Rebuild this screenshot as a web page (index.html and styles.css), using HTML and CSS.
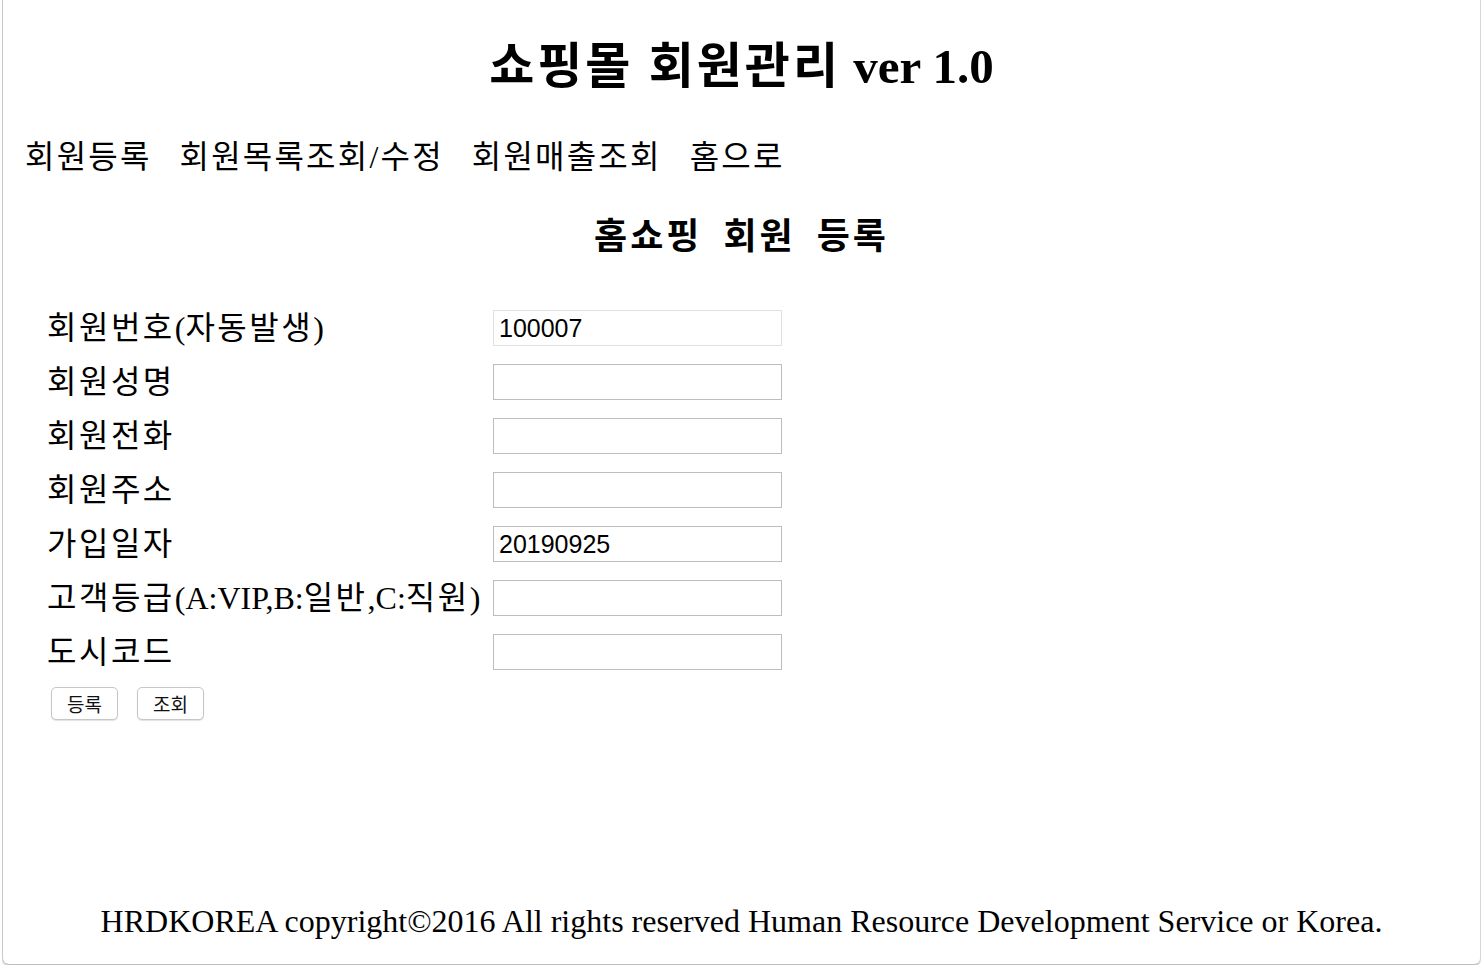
FILE: index.html
```html
<!DOCTYPE html>
<html lang="ko">
<head>
<meta charset="utf-8">
<title>쇼핑몰 회원관리 ver 1.0</title>
<link rel="stylesheet" href="styles.css">
</head>
<body>
<div class="window">
  <header class="page-header">
    <h1 class="title"><span class="title-ko">쇼핑몰 회원관리</span> ver 1.0</h1>
  </header>
  <nav class="nav">
    <a class="nav-link" href="#">회원등록</a>
    <a class="nav-link" href="#">회원목록조회/수정</a>
    <a class="nav-link" href="#">회원매출조회</a>
    <a class="nav-link" href="#">홈으로</a>
  </nav>
  <main class="content">
    <h2 class="section-title">홈쇼핑 회원 등록</h2>
    <form class="form">
      <div class="row">
        <label class="label">회원번호<span class="latin">(</span>자동발생<span class="latin">)</span></label>
        <input class="field field-readonly" type="text" value="100007" readonly>
      </div>
      <div class="row">
        <label class="label">회원성명</label>
        <input class="field" type="text">
      </div>
      <div class="row">
        <label class="label">회원전화</label>
        <input class="field" type="text">
      </div>
      <div class="row">
        <label class="label">회원주소</label>
        <input class="field" type="text">
      </div>
      <div class="row">
        <label class="label">가입일자</label>
        <input class="field" type="text" value="20190925">
      </div>
      <div class="row">
        <label class="label">고객등급<span class="latin">(A:VIP,B:</span>일반<span class="latin">,C:</span>직원<span class="latin">)</span></label>
        <input class="field" type="text">
      </div>
      <div class="row">
        <label class="label">도시코드</label>
        <input class="field" type="text">
      </div>
      <div class="buttons">
        <button class="btn" type="button">등록</button>
        <button class="btn" type="button">조회</button>
      </div>
    </form>
  </main>
  <footer class="footer">HRDKOREA copyright©2016 All rights reserved Human Resource Development Service or Korea.</footer>
</div>
</body>
</html>
```

FILE: styles.css
```css
html, body {
  margin: 0;
  padding: 0;
  background: #ffffff;
}

body {
  font-family: "Liberation Serif", "Noto Sans CJK KR", serif;
  color: #000;
}

.window {
  box-sizing: border-box;
  margin-left: 2px;
  margin-right: 1px;
  height: 965px;
  border-left: 1px solid #c9c9c9;
  border-right: 1px solid #d6d6d6;
  border-bottom: 1px solid #bdbdbd;
  border-radius: 0 0 7px 7px;
  box-shadow: 0 2px 0 #e2e2e2;
  display: flex;
  flex-direction: column;
  background: #fff;
}

.page-header {
  padding-top: 39px;
}

.title {
  margin: 0;
  text-align: center;
  font-size: 49px;
  line-height: 56px;
  font-weight: bold;
}

.title-ko {
  letter-spacing: 3px;
  word-spacing: 0;
}

.nav {
  display: flex;
  gap: 28px;
  margin-top: 42px;
  padding-left: 22px;
}

.nav-link {
  font-size: 32px;
  line-height: 40px;
  letter-spacing: 2.2px;
  color: #000;
  text-decoration: none;
}

.content {
  display: flex;
  flex-direction: column;
}

.section-title {
  margin: 38px 0 0;
  text-align: center;
  font-size: 36px;
  line-height: 44px;
  letter-spacing: 3px;
  word-spacing: 9px;
  font-weight: bold;
}

.form {
  margin-top: 42px;
  padding-left: 44px;
  display: flex;
  flex-direction: column;
}

.row {
  display: flex;
  align-items: center;
  height: 54px;
}

.label {
  width: 446px;
  flex: none;
  font-size: 32px;
  line-height: 36px;
  letter-spacing: 2.5px;
  white-space: nowrap;
}

.latin {
  letter-spacing: 0;
}

.field {
  box-sizing: border-box;
  width: 289px;
  height: 36px;
  margin: 0;
  padding: 0 5px;
  border: 1px solid #bdbdbd;
  border-radius: 0;
  background: #fff;
  font-family: "Liberation Sans", "Noto Sans CJK KR", sans-serif;
  font-size: 25px;
  color: #000;
  outline: none;
}

.field-readonly {
  border-color: #e0e0e0;
}

.buttons {
  display: flex;
  gap: 19px;
  margin-top: 8px;
  padding-left: 4px;
}

.btn {
  box-sizing: border-box;
  width: 67px;
  height: 33px;
  margin: 0;
  padding: 0;
  border: 1px solid #c6c6c6;
  border-radius: 5px;
  background: #fff;
  box-shadow: 0 1px 1px rgba(0, 0, 0, 0.12);
  font-family: "Noto Sans CJK KR", "Liberation Sans", sans-serif;
  font-size: 19px;
  line-height: 1;
  color: #111;
}

.footer {
  margin-top: auto;
  margin-bottom: 23px;
  text-align: center;
  font-size: 32px;
  line-height: 40px;
}
```
